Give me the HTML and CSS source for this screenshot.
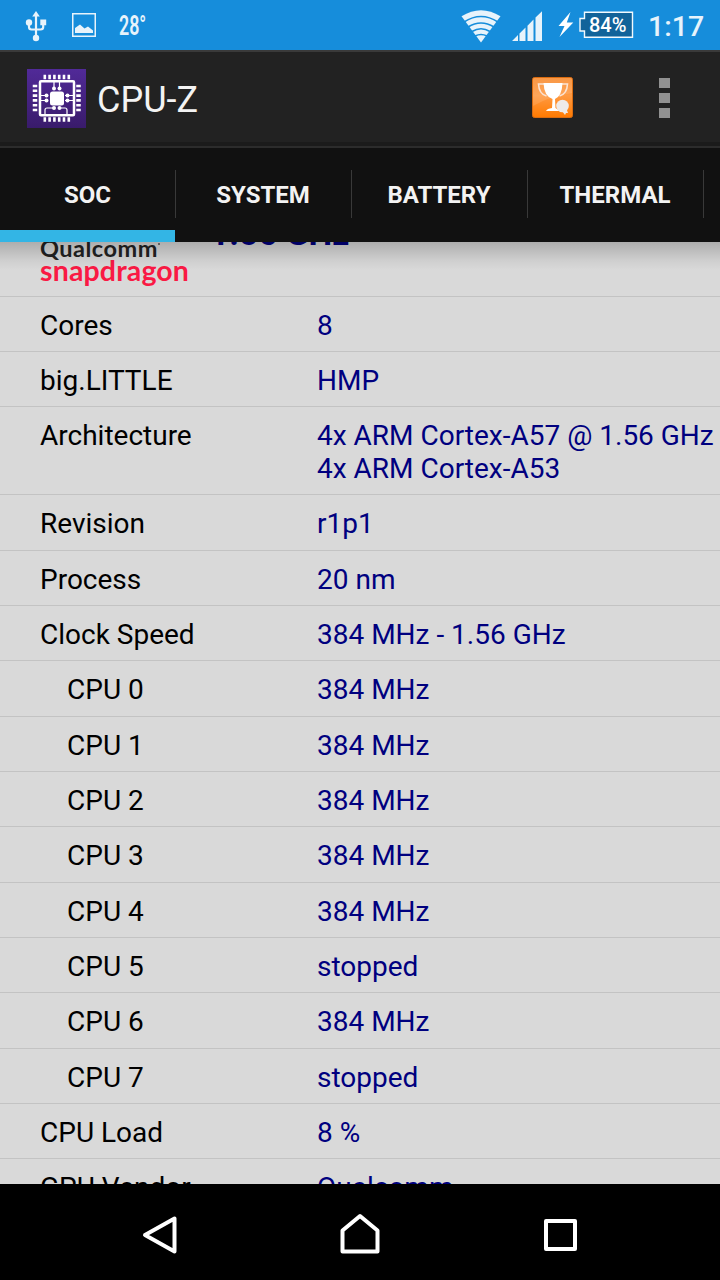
FILE: index.html
```
<!DOCTYPE html>
<html lang="en">
<head>
<meta charset="utf-8">
<title>CPU-Z</title>
<link rel="stylesheet" href="styles.css">
</head>
<body>
<div class="screen">
  <div class="status">
    <svg class="usb" width="22" height="32" viewBox="0 0 22 32" fill="none" stroke="#e7f3fb" stroke-width="2.200">
      <path d="M11 5V27M4 12V17Q4 19.500 6.500 19.500H15.500Q18.200 19.500 18.200 17V11"/>
      <path d="M11 1 14.800 6.500H7.200Z" fill="#e7f3fb" stroke="none"/>
      <circle cx="11" cy="28" r="3.200" fill="#e7f3fb" stroke="none"/>
      <circle cx="4" cy="12.500" r="3.200" fill="#e7f3fb" stroke="none"/>
      <path d="M15.300 9.500H21.200v5.700h-5.900z" fill="#e7f3fb" stroke="none"/>
    </svg>
    <svg class="photo" width="24" height="24" viewBox="0 0 24 24">
      <rect x=".75" y=".75" width="22.500" height="22.500" fill="none" stroke="#e7f3fb" stroke-width="1.500"/>
      <path d="M3 20V15L8 11.500 12.500 15.500 16 13.500 21 17.500V20Z" fill="#e7f3fb"/>
    </svg>
    <span class="temp">28°</span>
    <svg class="wifi" width="40" height="34" viewBox="0 0 40 34" fill="#e7f3fb">
      <path d="M.5 7.300Q20-5 39.500 7.300L20 33.500Z"/>
      <g fill="none" stroke="#168ddb" stroke-width="1.500">
        <path d="M3 13Q20 2 37 13M7 18Q20 10 33 18M11 22.500Q20 17 29 22.500M14 27Q20 24 26 27"/>
      </g>
    </svg>
    <svg class="signal" width="31" height="31" viewBox="0 0 31 31" fill="#e7f3fb">
      <path d="M0 30 6 24V30ZM7.500 22.500 13.500 16.500V30H7.500ZM15.500 14.700 21.500 8.500V30H15.500ZM23.500 6.500 30 .3V30H23.500Z"/>
    </svg>
    <svg class="bolt" width="16" height="26" viewBox="0 0 16 26" fill="#fff">
      <path d="M12.500 0 .5 14H6.500L1.500 25 15.300 10.500H8.800Z"/>
    </svg>
    <div class="battery">
      <svg width="55" height="28" viewBox="0 0 55 28"><path d="M5.500 1.200H53.500V26.200H5.500V20H1V7.500H5.500Z" fill="#11639a" stroke="#f2f9fd" stroke-width="1.400"/></svg>
      <span class="level">84%</span>
    </div>
    <span class="clock">1:17</span>
  </div>

  <div class="actionbar">
    <svg class="logo" width="59" height="59" viewBox="0 0 59 59">
      <defs><linearGradient id="purple" x1="0" y1="0" x2="0" y2="1"><stop offset="0" stop-color="#512a98"/><stop offset="1" stop-color="#391b6b"/></linearGradient></defs>
      <rect width="59" height="59" fill="url(#purple)"/>
      <g stroke="#fff" fill="none">
        <path d="M16.500 8H43.500M16.500 50.500H43.500" stroke-width="4.500" stroke-dasharray="2.600 2.200"/>
        <path d="M8 15.700V43.200M51.500 15.700V43.200" stroke-width="4.500" stroke-dasharray="2.600 2.200"/>
        <rect x="13" y="12.300" width="34" height="34" rx="1" stroke-width="2.500"/>
        <path d="M27 13V20M32.500 13V20M14 26.500H21M14 31.500H21M38 26.500H46M38 31.500H46M27 39H20Q18 39 18 41V46M32.500 39H38Q40 39 40 41V46" stroke-width="1.200"/>
      </g>
      <g fill="#fff">
        <rect x="23" y="22.500" width="14" height="14" rx="2.500"/>
        <circle cx="27" cy="19.500" r="2"/><circle cx="32.500" cy="19.500" r="2"/>
        <circle cx="19.500" cy="26.500" r="2"/><circle cx="19.500" cy="31.500" r="2"/>
        <circle cx="40.500" cy="26.500" r="2"/><circle cx="40.500" cy="31.500" r="2"/>
        <circle cx="27" cy="39" r="2"/><circle cx="32.500" cy="39" r="2"/>
      </g>
    </svg>
    <h1 class="title">CPU-Z</h1>
    <svg class="trophy" width="41" height="41" viewBox="0 0 41 41">
      <defs><linearGradient id="orange" x1="0" y1="0" x2="0" y2="1"><stop offset="0" stop-color="#f8892c"/><stop offset=".45" stop-color="#ff9a42"/><stop offset="1" stop-color="#ff7a00"/></linearGradient></defs>
      <rect x=".5" y=".5" width="40" height="40" rx="2" fill="url(#orange)" stroke="#d96b10"/>
      <path d="M1 1H40V16Q18 19 1 29Z" fill="#fff" opacity=".12"/>
      <path d="M12 7H6.500Q7 17 14.500 19M30 7H35.500Q35 17 27.500 19" fill="none" stroke="#fbe3d3" stroke-width="1.600"/>
      <path d="M11.500 6H30.500Q30 19 23 22L23.500 31 28 34H14Q15 31.500 20 31L20.500 22Q12 19 11.500 6Z" fill="#fff"/>
      <circle cx="30.500" cy="29" r="6.300" fill="#eeeae8"/>
      <path d="M30 34 33 38 34 36 36 36 34.500 32Z" fill="#eeeae8"/>
    </svg>
    <div class="overflow"><i class="dot"></i><i class="dot"></i><i class="dot"></i></div>
  </div>

  <div class="tabs">
    <div class="tab active"><span>SOC</span></div>
    <div class="tab"><span>SYSTEM</span></div>
    <div class="tab"><span>BATTERY</span></div>
    <div class="tab"><span>THERMAL</span></div>
  </div>

  <div class="list">
    <div class="chip">
      <div class="brand"><span class="qualcomm">Qualcomm<i class="mark"></i></span><span class="snapdragon">snapdragon</span></div>
      <div class="speed">1.56 GHz</div>
    </div>
    <div class="row"><span class="name">Cores</span><span class="value">8</span></div>
    <div class="row"><span class="name">big.LITTLE</span><span class="value">HMP</span></div>
    <div class="row"><span class="name">Architecture</span><span class="value">4x ARM Cortex-A57 @ 1.56 GHz<br>4x ARM Cortex-A53</span></div>
    <div class="row"><span class="name">Revision</span><span class="value">r1p1</span></div>
    <div class="row"><span class="name">Process</span><span class="value">20 nm</span></div>
    <div class="row"><span class="name">Clock Speed</span><span class="value">384 MHz - 1.56 GHz</span></div>
    <div class="row sub"><span class="name">CPU 0</span><span class="value">384 MHz</span></div>
    <div class="row sub"><span class="name">CPU 1</span><span class="value">384 MHz</span></div>
    <div class="row sub"><span class="name">CPU 2</span><span class="value">384 MHz</span></div>
    <div class="row sub"><span class="name">CPU 3</span><span class="value">384 MHz</span></div>
    <div class="row sub"><span class="name">CPU 4</span><span class="value">384 MHz</span></div>
    <div class="row sub"><span class="name">CPU 5</span><span class="value">stopped</span></div>
    <div class="row sub"><span class="name">CPU 6</span><span class="value">384 MHz</span></div>
    <div class="row sub"><span class="name">CPU 7</span><span class="value">stopped</span></div>
    <div class="row"><span class="name">CPU Load</span><span class="value">8 %</span></div>
    <div class="row"><span class="name">GPU Vendor</span><span class="value">Qualcomm</span></div>
  </div>

  <div class="navbar">
    <svg width="40" height="44" viewBox="0 0 40 44"><path d="M34.500 6.500V39.500L5 23Z"/></svg>
    <svg width="40" height="44" viewBox="0 0 40 44"><path d="M2.500 39.500V18.500L20 4 37.500 18.500V39.500Z"/></svg>
    <svg width="40" height="44" viewBox="0 0 40 44"><path d="M6 9H35V37H6Z"/></svg>
  </div>
</div>
</body>
</html>
```
FILE: styles.css
```
* { box-sizing: border-box; }
body { margin: 0; background: #000; font-family: Roboto, "Liberation Sans", sans-serif; }
svg { display: block; flex: none; }
.screen { width: 720px; height: 1280px; display: flex; flex-direction: column; overflow: hidden; }

.status { height: 50px; flex: none; display: flex; align-items: flex-start; background: #168ddb; color: #e7f3fb; }
.usb { margin: 10px 0 0 25px; }
.photo { margin: 13px 0 0 25px; }
.temp { margin: 10px 0 0 23px; width: 26px; font-size: 27px; line-height: 32px; font-weight: 600; transform: scaleX(.66); transform-origin: 0 0; white-space: nowrap; }
.wifi { margin: 9px 0 0 316px; }
.signal { margin: 11px 0 0 11px; }
.bolt { margin: 12px 0 0 15px; }
.battery { position: relative; margin: 11px 0 0 5px; width: 55px; height: 28px; }
.level { position: absolute; left: 10px; top: 2px; font-size: 20px; line-height: 24px; font-weight: 500; color: #fff; }
.clock { margin: 10px 0 0 14px; font-size: 28.500px; line-height: 34px; font-weight: 500; }

.actionbar { height: 98px; flex: none; display: flex; align-items: flex-start; background: #222; border-top: 2px solid #3a3a3a; border-bottom: 2px solid #2c2c2c; box-shadow: inset 0 -4px #1b1b1b; }
.logo { margin: 17px 0 0 27px; }
.title { margin: 27px 0 0 11px; width: 110px; font-size: 36px; line-height: 42px; font-weight: 400; color: #f3f3f3; }
.trophy { margin: 25px 0 0 325px; }
.overflow { margin: 26px 0 0 86px; display: flex; flex-direction: column; gap: 5px; }
.dot { width: 11px; height: 10px; background: #919191; }

.tabs { height: 94px; flex: none; display: flex; background: #111; overflow: hidden; }
.tab { width: 176px; flex: none; height: 94px; display: flex; align-items: center; justify-content: center; position: relative; font-size: 24px; font-weight: 700; color: #f3f3f3; }
.tab:first-child { width: 175px; }
.tab::after { content: ""; position: absolute; right: -1px; top: 22px; width: 1px; height: 48px; background: #393939; }
.active { border-bottom: 12px solid #33b5e5; padding-top: 12px; }

.list { position: relative; height: 942px; flex: none; overflow: hidden; background: #d9d9d9; font-size: 28px; line-height: 32.67px; }
.list::before { content: ""; position: absolute; z-index: 1; left: 0; right: 0; top: 0; height: 28px; background: linear-gradient(rgba(0,0,0,.2), rgba(0,0,0,.05) 65%, transparent); }
.chip { height: 54.5px; display: flex; align-items: flex-end; border-bottom: 1px solid #c3c3c3; }
.brand { margin: 0 0 14px 40px; width: 174px; display: flex; flex-direction: column; font-family: Lato, "Open Sans", sans-serif; }
.qualcomm { margin-bottom: -2px; font-size: 23.500px; line-height: 24px; font-weight: 700; letter-spacing: .5px; color: #222; display: flex; }
.mark { width: 2px; height: 2px; margin-top: 7px; background: #777; }
.snapdragon { font-size: 28.500px; line-height: 24px; font-weight: 700; letter-spacing: .15px; color: #fa1944; }
.speed { margin-bottom: 45px; margin-left: -4px; font-size: 33.500px; line-height: 34px; font-weight: 700; color: #00007f; white-space: nowrap; }
.row { display: flex; padding: 13.13px 0 8.550px 40px; border-bottom: 1px solid #c3c3c3; }
.name { width: 277px; flex: none; color: #000; }
.value { color: #00007f; white-space: nowrap; }
.sub { padding-left: 67px; }
.sub .name { width: 250px; }

.navbar { height: 96px; flex: none; display: flex; justify-content: center; gap: 160px; padding-top: 28px; background: #000; }
.navbar path { fill: none; stroke: #fff; stroke-width: 4; stroke-linejoin: round; }
```
